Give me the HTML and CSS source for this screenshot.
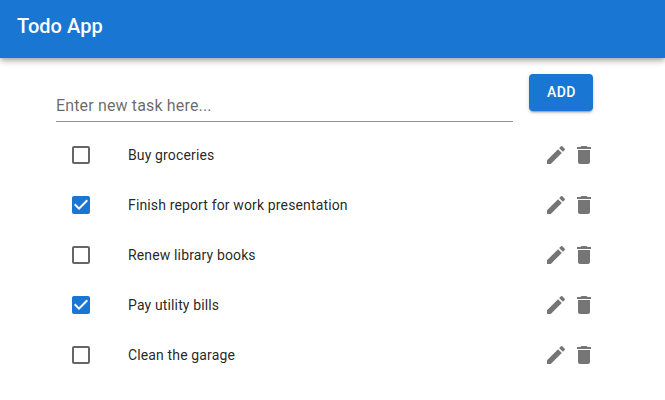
FILE: index.html
```html
<!DOCTYPE html>
<html lang="en">
<head>
<meta charset="utf-8">
<title>Todo App</title>
<link rel="stylesheet" href="styles.css">
</head>
<body>
<svg class="sprite" aria-hidden="true">
<symbol id="off" viewBox="0 0 24 24"><path d="M19 5v14H5V5h14m0-2H5c-1.1 0-2 .9-2 2v14c0 1.1.9 2 2 2h14c1.1 0 2-.9 2-2V5c0-1.1-.9-2-2-2z"/></symbol>
<symbol id="on" viewBox="0 0 24 24"><path d="M19 3H5c-1.11 0-2 .9-2 2v14c0 1.1.89 2 2 2h14c1.11 0 2-.9 2-2V5c0-1.1-.89-2-2-2zm-9 14l-5-5 1.41-1.41L10 14.17l7.59-7.59L19 8l-9 9z"/></symbol>
<symbol id="edit" viewBox="0 0 24 24"><path d="M3 17.25V21h3.75L17.81 9.94l-3.75-3.75L3 17.25zM20.71 7.04c.39-.39.39-1.02 0-1.41l-2.34-2.34a.9959.9959 0 0 0-1.41 0l-1.83 1.83 3.75 3.75 1.83-1.83z"/></symbol>
<symbol id="delete" viewBox="0 0 24 24"><path d="M6 19c0 1.1.9 2 2 2h8c1.1 0 2-.9 2-2V7H6v12zM19 4h-3.5l-1-1h-5l-1 1H5v2h14V4z"/></symbol>
</svg>
<header class="app-bar"><h1>Todo App</h1></header>
<main class="container">
<form class="entry">
<input class="field" type="text" placeholder="Enter new task here...">
<button class="add" type="button">Add</button>
</form>
<ul class="list">
<li class="item"><svg class="icon"><use href="#off"/></svg><span class="label">Buy groceries</span><svg class="icon action"><use href="#edit"/></svg><svg class="icon action trash"><use href="#delete"/></svg></li>
<li class="item"><svg class="icon checked"><use href="#on"/></svg><span class="label">Finish report for work presentation</span><svg class="icon action"><use href="#edit"/></svg><svg class="icon action trash"><use href="#delete"/></svg></li>
<li class="item"><svg class="icon"><use href="#off"/></svg><span class="label">Renew library books</span><svg class="icon action"><use href="#edit"/></svg><svg class="icon action trash"><use href="#delete"/></svg></li>
<li class="item"><svg class="icon checked"><use href="#on"/></svg><span class="label">Pay utility bills</span><svg class="icon action"><use href="#edit"/></svg><svg class="icon action trash"><use href="#delete"/></svg></li>
<li class="item"><svg class="icon"><use href="#off"/></svg><span class="label">Clean the garage</span><svg class="icon action"><use href="#edit"/></svg><svg class="icon action trash"><use href="#delete"/></svg></li>
</ul>
</main>
</body>
</html>
```
FILE: styles.css
```css
* { box-sizing: border-box; }
body { margin: 0; background: #fff; font-family: Roboto, sans-serif; color: rgba(0,0,0,.87); overflow: hidden; }
.sprite { display: none; }
.app-bar {
  height: 58px;
  padding: 10px 17px 0;
  background: #1976d2;
  color: #fff;
  box-shadow: 0 2px 4px -1px rgba(0,0,0,.2), 0 4px 5px 0 rgba(0,0,0,.14), 0 1px 10px 0 rgba(0,0,0,.12);
}
h1 { margin: 0; font-size: 20px; font-weight: 500; line-height: 32px; letter-spacing: .05px; }
.container { padding: 16px 72px 0 56px; }
.entry { display: flex; align-items: flex-start; gap: 16px; height: 56px; }
.field {
  flex: 1;
  min-width: 0;
  height: 32px;
  margin: 16px 0 0;
  padding: 4px 0 5px;
  border: 0;
  border-bottom: 1px solid rgba(0,0,0,.42);
  outline: 0;
  background: transparent;
  font: 400 16px/23px Roboto, sans-serif;
  letter-spacing: .15px;
}
.field::placeholder { color: rgba(0,0,0,.6); opacity: 1; }
.add {
  width: 64px;
  height: 37px;
  padding: 0 0 2px 1px;
  border: 0;
  border-radius: 4px;
  background: #1976d2;
  color: #fff;
  font: 500 14px/24px Roboto, sans-serif;
  letter-spacing: .4px;
  text-transform: uppercase;
  box-shadow: 0 3px 1px -2px rgba(0,0,0,.2), 0 2px 2px 0 rgba(0,0,0,.14), 0 1px 5px 0 rgba(0,0,0,.12);
}
.list { margin: 0; padding: 0; list-style: none; }
.item { display: flex; align-items: center; height: 50px; padding-left: 13px; }
.icon { flex: none; width: 24px; height: 24px; fill: rgba(0,0,0,.6); }
.checked { fill: #1976d2; }
.action { fill: rgba(0,0,0,.54); }
.label { flex: 1; margin-left: 35px; font-size: 14px; line-height: 20px; letter-spacing: .14px; }
.trash { margin-left: 4px; margin-right: -3px; }
```
